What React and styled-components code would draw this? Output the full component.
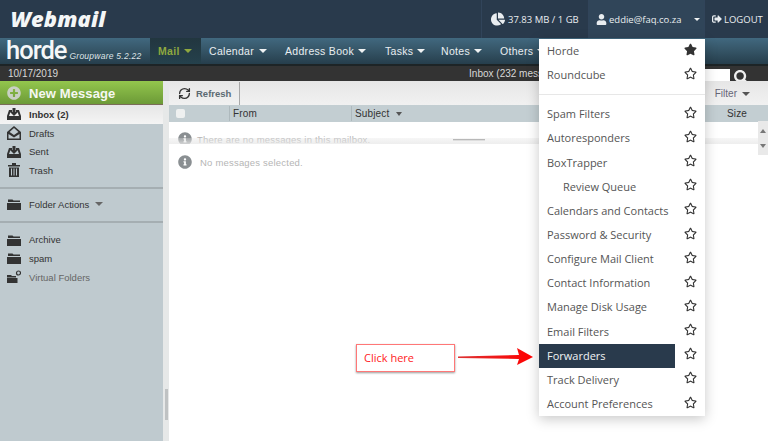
import React from 'react';
import styled, { createGlobalStyle } from 'styled-components';
import { FaStar, FaRegStar, FaChartPie, FaUser, FaSearch, FaSignOutAlt, FaInfoCircle, FaPlusCircle } from 'react-icons/fa';
import { LuRefreshCw } from 'react-icons/lu';

const Global = createGlobalStyle`
  html, body { margin: 0; padding: 0; background: #fff; }
  * { box-sizing: border-box; }
`;
const Page = styled.div`
  position: relative; width: 768px; height: 441px; overflow: hidden; display: flex; flex-direction: column;
  font-family: "Liberation Sans", Arial, sans-serif; color: #333;
`;
const TopBar = styled.header`
  height: 38px; background: #293a4c; display: flex; align-items: stretch; justify-content: space-between; flex: none;
`;
const Logo = styled.div`
  font-family: "Open Sans", sans-serif; font-weight: 800; font-style: italic; font-size: 21px; color: #f4f6f7;
  padding-left: 10px; letter-spacing: 0.15px; line-height: 39px;
  transform: scaleX(1.04); transform-origin: left center;
`;
const TopRight = styled.div`display: flex; align-items: stretch;`;
const TopCell = styled.div`
  width: ${p => p.$w}px; display: flex; align-items: center; padding-left: ${p => p.$pl}px; gap: ${p => p.$gap ?? 3}px;
  border-left: ${p => p.$line ? '1px solid #31445a' : 'none'};
  background: ${p => p.$active ? '#304559' : 'transparent'};
  font-family: "Open Sans", sans-serif; font-size: 9.5px; color: #e9edf0; white-space: nowrap;
  & svg { flex: none; }
`;
const Caret = styled.span`
  display: inline-block; flex: none; width: 0; height: 0;
  border-left: ${p => p.$s ?? 4}px solid transparent; border-right: ${p => p.$s ?? 4}px solid transparent;
  border-top: ${p => (p.$s ?? 4) + 0.5}px solid ${p => p.$c ?? '#f0f3f4'};
  margin-left: ${p => p.$ml ?? 4}px;
`;
const NavBar = styled.nav`
  height: 28px; flex: none; display: flex; align-items: stretch; border-bottom: 2px solid #1d2426;
  background: linear-gradient(#41687f 0%, #365668 45%, #263e4c 100%);
`;
const Brand = styled.div`width: 150px; flex: none; display: flex; align-items: baseline; padding-left: 6px; gap: 3px; line-height: 25px;`;
const BrandName = styled.span`font-family: Roboto, sans-serif; font-size: 25.5px; font-weight: 500; color: #f5f7f8; letter-spacing: -1px;`;
const BrandSub = styled.span`font-size: 8.5px; font-style: italic; color: #dfe5e8; letter-spacing: 0.25px; white-space: nowrap;`;
const NavItem = styled.div`
  display: flex; align-items: center; font-size: 10.5px; letter-spacing: 0.3px; white-space: nowrap;
  width: ${p => p.$w}px; padding-left: ${p => p.$pl ?? 8}px;
  color: ${p => p.$active ? '#8fa83f' : '#e9eef1'}; font-weight: ${p => p.$active ? 'bold' : 'normal'};
  background: ${p => p.$active ? 'linear-gradient(#22363f, #25414c)' : 'transparent'};
`;
const DateBar = styled.div`
  height: 15px; flex: none; background: #333; color: #d8d8d8; font-size: 10px; display: flex; align-items: center; padding-left: 8px;
`;
const Mailbox = styled.span`margin-left: 411px; white-space: nowrap;`;
const SearchInput = styled.div`margin-left: auto; width: 60px; height: 12px; align-self: flex-end; background: #fff;`;
const SearchIcon = styled.div`
  width: 38px; height: 15px; overflow: hidden; color: #eee; padding: 4px 0 0 4px; font-size: 15px; line-height: 1;
`;
const Body = styled.div`display: flex; flex: 1; min-height: 0;`;
const Sidebar = styled.aside`width: 163px; flex: none; background: #bfcacf;`;
const NewMessage = styled.div`
  height: 24px; display: flex; align-items: center; gap: 8px; padding: 1px 0 0 7px; color: #f6f8f2; font-weight: bold;
  background: linear-gradient(#93c64d, #6c9a37); border-bottom: 1px solid #7a6b58; font-size: 13px; letter-spacing: 0.1px;
`;
const PlusBadge = styled.span`color: #c9d0c4; font-size: 14px; display: flex;`;
const FolderRow = styled.div`
  height: 18.7px; display: flex; align-items: center; gap: 8px; padding-left: 7px; font-size: 9.5px;
  color: ${p => p.$muted ? '#666' : '#333'}; font-weight: ${p => p.$active ? 'bold' : 'normal'};
  background: ${p => p.$active ? 'linear-gradient(#e6e6e6, #f4f4f4)' : 'transparent'};
`;
const FolderGroup = styled.div`
  border-top: ${p => p.$line ? '2px solid #a5aeb2' : 'none'}; padding: ${p => p.$pad ?? '0'};
  margin-top: ${p => p.$mt ?? 0}px;
`;
const Glyph = styled.svg`width: 14px; height: 14px; flex: none; fill: #333;`;
const Handle = styled.div`
  width: 6px; flex: none; background: #e6e8e8; display: flex; align-items: flex-start; justify-content: center; padding-top: 308px;
`;
const Grip = styled.div`width: 3px; height: 31px; background: #bfc2c3;`;
const Main = styled.main`flex: 1; min-width: 0; display: flex; flex-direction: column; position: relative;`;
const Toolbar = styled.div`
  height: 24px; flex: none; display: flex; align-items: stretch; justify-content: space-between; padding: 1px 18px 0 0;
  background: linear-gradient(#e6e6e6, #f1f1f1);
`;
const Refresh = styled.div`
  width: 71px; display: flex; align-items: center; gap: 5px; padding-left: 9px; border-right: 1px solid #a8a8a8;
  font-size: 9.5px; font-weight: bold; color: #5b6a72;
`;
const Filter = styled.div`display: flex; align-items: center; font-size: 10px; color: #667;`;
const Header = styled.div`
  height: 17px; flex: none; background: #c3ced2; display: flex; align-items: center; font-size: 10px; color: #333; letter-spacing: 0.15px;
`;
const Col = styled.div`
  width: ${p => p.$w}px; height: 15px; display: flex; align-items: center; padding-left: ${p => p.$pl ?? 3}px;
  border-left: ${p => p.$line ? '1px solid #aeb9bd' : 'none'}; white-space: nowrap;
`;
const Check = styled.span`width: 9px; height: 9px; background: #eef0f0; border-radius: 2px; display: block;`;
const List = styled.div`height: 16px; flex: none; background: #fff; padding-top: 10px;`;
const Notice = styled.div`
  display: flex; align-items: center; height: 14px; padding-left: 9px; gap: ${p => p.$gap ?? 5}px; color: #b5b5b5; font-size: 9.5px; letter-spacing: 0.2px; white-space: nowrap;
  & svg { color: #8a8f92; font-size: 14px; flex: none; }
`;
const Splitter = styled.div`
  height: 6px; flex: none; position: relative; z-index: 1; display: flex; justify-content: center; align-items: flex-start;
  background: linear-gradient(rgba(225,225,225,.3), rgba(232,232,232,.75));
  padding-top: 1px;
`;
const SplitGrip = styled.div`width: 32px; height: 2px; border-top: 1px solid #b8b8b8; border-bottom: 1px solid #ddd;`;
const Preview = styled.div`flex: 1; background: #fff; padding-top: 11px;`;
const ScrollBar = styled.div`
  position: absolute; z-index: 2; right: 0; top: 40px; width: 10px; height: 34px; background: #e9e9e9;
  display: flex; flex-direction: column; align-items: center; justify-content: space-around; padding: 2px 0;
`;
const ScrollArrow = styled.span`
  width: 0; height: 0; border-left: 3px solid transparent; border-right: 3px solid transparent;
  ${p => p.$up ? 'border-bottom: 4px solid #777;' : 'border-top: 4px solid #777;'}
`;
const Menu = styled.div`
  position: absolute; left: 539px; top: 39px; width: 166px; background: #fff; z-index: 5;
  box-shadow: 0 3px 12px rgba(0,0,0,.22); font-family: "Open Sans", sans-serif; font-size: 11px; color: #555;
`;
const MenuRow = styled.div`height: 24.15px; display: flex; align-items: center;`;
const MenuLabel = styled.div`
  width: 136px; height: 100%; display: flex; align-items: center; white-space: nowrap; padding-bottom: 1px;
  padding-left: ${p => p.$indent ? 24 : 8}px;
  background: ${p => p.$active ? '#293a4c' : 'transparent'}; color: ${p => p.$active ? '#f0f2f4' : '#555'};
`;
const MenuStar = styled.div`flex: 1; display: flex; justify-content: center; font-size: 13px; color: #333; padding-bottom: 4px;`;
const MenuDivider = styled.div`height: 15px; display: flex; align-items: center; &::after { content: ''; width: 100%; height: 1px; background: #e7e7e7; margin-top: -1px; }`;
const Callout = styled.div`
  position: absolute; left: 356px; top: 344px; width: 99px; height: 28px; z-index: 6; background: #fff; border: 1px solid #f77;
  box-shadow: 0 1px 2px rgba(0,0,0,.4); color: #f22; font-family: "Open Sans", sans-serif; font-size: 11px; display: flex; align-items: center; padding: 0 0 2px 7px;
`;
const Arrow = styled.svg`position: absolute; left: 458px; top: 347px; width: 76px; height: 20px; z-index: 6;`;

const InboxIcon = () => (
  <Glyph viewBox="0 0 14 14"><path d="M2 3h3v2H3.400L2 9h10l-1.400-4H9V3h3l2 6v4H0V9z" /><path d="M5.500 1h3v4H11L7 9 3 5h2.500z" /></Glyph>
);
const DraftsIcon = () => (
  <Glyph viewBox="0 0 14 14"><path d="M7 0l7 6v8H0V6zm0 2L2.600 6 7 9l4.400-3zM1.500 8v4.500h11V8L7 11.500z" /></Glyph>
);
const TrashIcon = () => (
  <Glyph viewBox="0 0 14 14"><path d="M1 2h4V0h4v2h4v1.500H1zM2 4.500h10V14H2zm2 1v7h1v-7zm2.500 0v7h1v-7zm2.500 0v7h1v-7z" /></Glyph>
);
const FolderIcon = () => (
  <Glyph viewBox="0 0 14 14"><path d="M1 2.500h4.500l1 1H13V5H1zM0 6h14v7H0z" /></Glyph>
);
const VirtualIcon = () => (
  <Glyph viewBox="0 0 14 14"><path d="M0 5h4l1 1h4v1.500H0zM0 8h10.500v5H0z" /><circle cx="11.500" cy="3" r="2" fill="none" stroke="#333" strokeWidth="1.200" /></Glyph>
);

const items = [
  ['Spam Filters'], ['Autoresponders'], ['BoxTrapper'], ['Review Queue', true], ['Calendars and Contacts'],
  ['Password & Security'], ['Configure Mail Client'], ['Contact Information'], ['Manage Disk Usage'], ['Email Filters'],
  ['Forwarders', false, true], ['Track Delivery'], ['Account Preferences'],
];

export default function App() {
  return (
    <Page>
      <Global />
      <TopBar>
        <Logo>Webmail</Logo>
        <TopRight>
          <TopCell $w={107} $pl={9} $line><FaChartPie size={14} />37.83 MB / 1 GB</TopCell>
          <TopCell $w={116} $pl={7} $gap={2} $line $active><FaUser size={11} />eddie@faq.co.za<Caret $s={3} $ml={11} /></TopCell>
          <TopCell $w={64} $pl={7} $gap={2} $line><FaSignOutAlt size={10} />LOGOUT</TopCell>
        </TopRight>
      </TopBar>
      <NavBar>
        <Brand><BrandName>horde</BrandName><BrandSub>Groupware 5.2.22</BrandSub></Brand>
        <NavItem $w={51} $active>Mail<Caret $c="#8fa83f" /></NavItem>
        <NavItem $w={76}>Calendar<Caret $ml={5} /></NavItem>
        <NavItem $w={100}>Address Book<Caret /></NavItem>
        <NavItem $w={56}>Tasks<Caret /></NavItem>
        <NavItem $w={59}>Notes<Caret /></NavItem>
        <NavItem $w={60}>Others<Caret /></NavItem>
      </NavBar>
      <DateBar>
        10/17/2019
        <Mailbox>Inbox (232 messages)</Mailbox>
        <SearchInput />
        <SearchIcon><FaSearch /></SearchIcon>
      </DateBar>
      <Body>
        <Sidebar>
          <NewMessage><PlusBadge><FaPlusCircle /></PlusBadge>New Message</NewMessage>
          <FolderGroup>
            <FolderRow $active><InboxIcon />Inbox (2)</FolderRow>
            <FolderRow><DraftsIcon />Drafts</FolderRow>
            <FolderRow><InboxIcon />Sent</FolderRow>
            <FolderRow><TrashIcon />Trash</FolderRow>
          </FolderGroup>
          <FolderGroup $line $mt={7} $pad="6px 0 8px">
            <FolderRow><FolderIcon />Folder Actions<Caret $c="#666" $ml={-2} /></FolderRow>
          </FolderGroup>
          <FolderGroup $line $pad="7px 0 0">
            <FolderRow><FolderIcon />Archive</FolderRow>
            <FolderRow><FolderIcon />spam</FolderRow>
            <FolderRow $muted><VirtualIcon />Virtual Folders</FolderRow>
          </FolderGroup>
        </Sidebar>
        <Handle><Grip /></Handle>
        <Main>
          <Toolbar>
            <Refresh><LuRefreshCw size={13} color="#333" strokeWidth={2.5} />Refresh</Refresh>
            <Filter>Filter<Caret $c="#555" $ml={5} /></Filter>
          </Toolbar>
          <Header>
            <Col $w={60} $pl={7}><Check /></Col>
            <Col $w={122} $line>From</Col>
            <Col $w={375} $line>Subject<Caret $c="#555" $ml={7} $s={3.5} /></Col>
            <Col $w={40} $pl={1}>Size</Col>
          </Header>
          <List><Notice><FaInfoCircle />There are no messages in this mailbox.</Notice></List>
          <Splitter><SplitGrip /></Splitter>
          <Preview><Notice $gap={8}><FaInfoCircle />No messages selected.</Notice></Preview>
          <ScrollBar><ScrollArrow $up /><ScrollArrow /></ScrollBar>
        </Main>
      </Body>
      <Menu>
        <MenuRow><MenuLabel>Horde</MenuLabel><MenuStar><FaStar /></MenuStar></MenuRow>
        <MenuRow><MenuLabel>Roundcube</MenuLabel><MenuStar><FaRegStar /></MenuStar></MenuRow>
        <MenuDivider />
        {items.map(([label, indent, active]) => (
          <MenuRow key={label}>
            <MenuLabel $indent={indent} $active={active}>{label}</MenuLabel>
            <MenuStar><FaRegStar /></MenuStar>
          </MenuRow>
        ))}
      </Menu>
      <Callout>Click here</Callout>
      <Arrow viewBox="0 0 76 20">
        <defs>
          <linearGradient id="ar" x1="0" x2="1" y1="0" y2="0"><stop offset="0" stopColor="#d33" /><stop offset="1" stopColor="#f00" /></linearGradient>
        </defs>
        <path d="M0 9.500 L61 8 L59 1 L75 10 L59 18 L61 12 L0 11 Z" fill="url(#ar)" />
      </Arrow>
    </Page>
  );
}
